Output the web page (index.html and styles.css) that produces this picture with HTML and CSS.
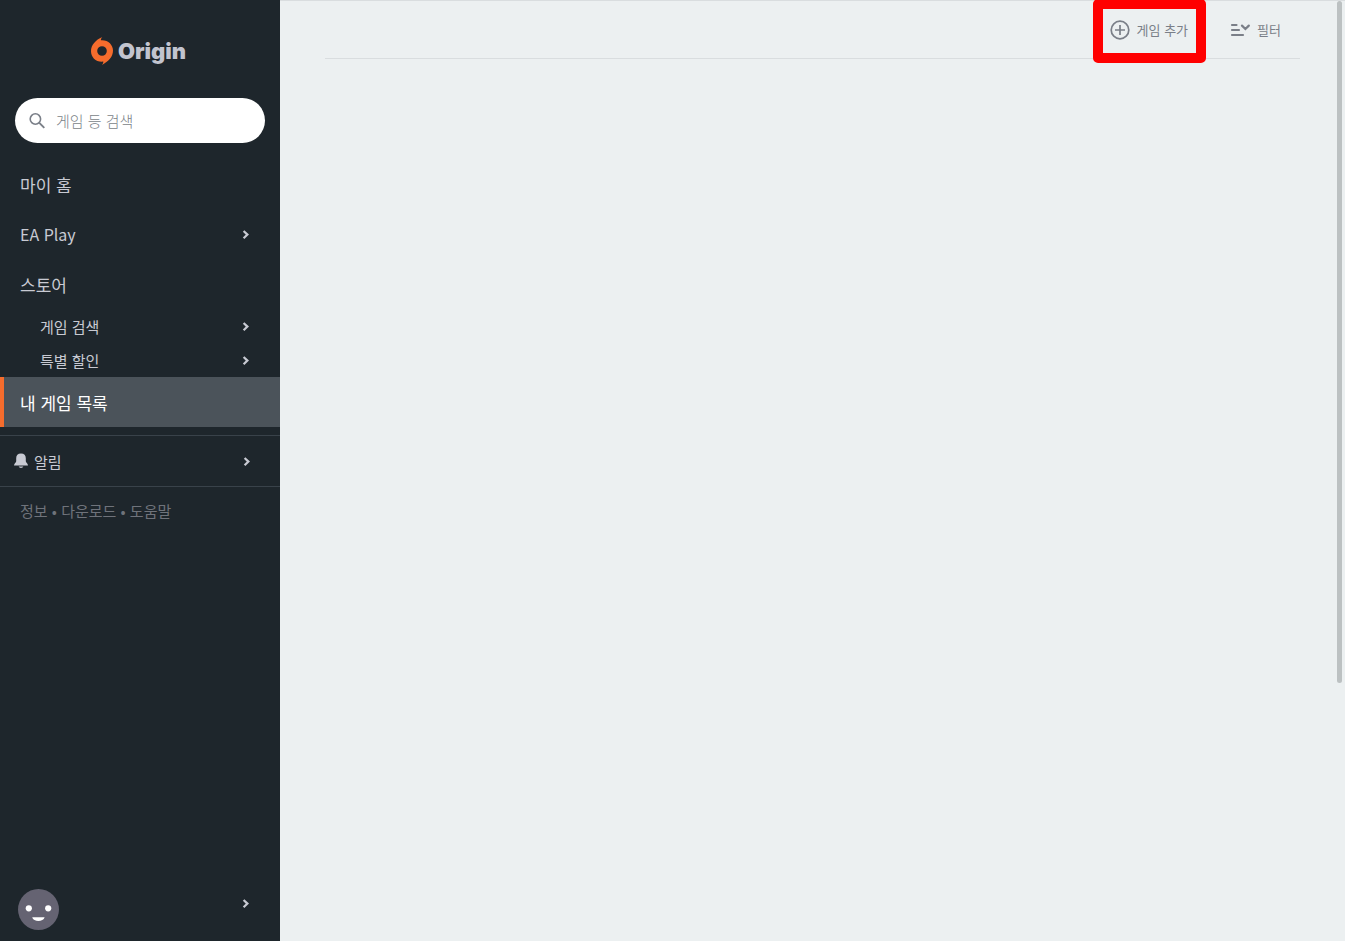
FILE: index.html
```html
<!DOCTYPE html>
<html lang="ko">
<head>
    <meta charset="UTF-8">
    <meta name="viewport" content="width=device-width, initial-scale=1.0">
    <title>Origin</title>
    <link rel="stylesheet" href="styles.css">
</head>
<body>
    <svg class="defs" aria-hidden="true">
        <symbol id="chevron" viewBox="0 0 8 10">
            <path d="M1.6 2 L5.4 5.6 L1.6 9.2" fill="none" stroke="currentColor" stroke-width="2.2"/>
        </symbol>
    </svg>
    <aside class="sidebar">
        <a href="#" class="logo">
            <svg width="22" height="28" viewBox="0 0 22 28" aria-hidden="true">
                <path fill="#f56c2d" fill-rule="evenodd" d="M11.3 0 C10.2 1.2 9.9 2.2 9.9 3.2 C17 2.6 22 7.6 22 13.6 C22 20 17.5 24.6 11 28 C12 26.8 12.4 25.7 12.3 24.6 C5 25.3 0 20.4 0 14.2 C0 8 4.6 3 11.3 0 Z M11 9.2 A4.8 4.8 0 1 0 11 18.8 A4.8 4.8 0 1 0 11 9.2 Z"/>
            </svg>
            <span>Origin</span>
        </a>
        <form class="search">
            <svg width="16" height="16" viewBox="0 0 16 16" aria-hidden="true">
                <circle cx="6.4" cy="6" r="5.2" fill="none" stroke="#7a7f88" stroke-width="1.6"/>
                <path d="M10.1 9.7 L15.3 14.9" stroke="#7a7f88" stroke-width="1.9"/>
            </svg>
            <input type="text" placeholder="게임 등 검색" aria-label="게임 등 검색">
        </form>
        <nav class="menu">
            <a href="#" class="item">마이 홈</a>
            <a href="#" class="item latin">EA Play<svg class="chevron"><use href="#chevron"/></svg></a>
            <a href="#" class="item">스토어</a>
            <a href="#" class="item sub">게임 검색<svg class="chevron"><use href="#chevron"/></svg></a>
            <a href="#" class="item sub">특별 할인<svg class="chevron"><use href="#chevron"/></svg></a>
            <a href="#" class="item active">내 게임 목록</a>
        </nav>
        <a href="#" class="notice">
            <svg width="14" height="16" viewBox="0 0 14 16" aria-hidden="true">
                <path fill="currentColor" d="M7 0.5 C3.8 0.5 2.2 2.6 2.2 5.2 V8.3 C2.2 9.6 0 10.6 0 12.4 H14 C14 10.6 11.8 9.6 11.8 8.3 V5.2 C11.8 2.6 10.2 0.5 7 0.5 Z M4.6 13.6 A2.5 1.9 0 0 0 9.4 13.6 Z"/>
            </svg>
            <span>알림</span>
            <svg class="chevron"><use href="#chevron"/></svg>
        </a>
        <div class="links">
            <a href="#">정보</a> • <a href="#">다운로드</a> • <a href="#">도움말</a>
        </div>
        <button type="button" class="profile" aria-label="프로필">
            <svg class="avatar" width="41" height="41" viewBox="0 0 41 41" aria-hidden="true">
                <circle cx="20.5" cy="20.5" r="20.5" fill="#656372"/>
                <circle cx="10.8" cy="19.3" r="3.1" fill="#fff"/>
                <circle cx="30.2" cy="19.3" r="3.1" fill="#fff"/>
                <path d="M14.2 28.3 H26.6 C25.4 33.3 15.4 33.3 14.2 28.3 Z" fill="#fff"/>
            </svg>
            <svg class="chevron"><use href="#chevron"/></svg>
        </button>
    </aside>
    <main class="content">
        <div class="toolbar">
            <button type="button" class="tool marked">
                <svg width="20" height="20" viewBox="0 0 20 20" aria-hidden="true">
                    <circle cx="10" cy="10" r="8.8" fill="none" stroke="currentColor" stroke-width="1.7"/>
                    <path d="M10 5 V15 M5 10 H15" stroke="currentColor" stroke-width="1.7"/>
                </svg>
                게임 추가
            </button>
            <button type="button" class="tool">
                <svg width="20" height="14" viewBox="0 0 20 14" aria-hidden="true">
                    <path d="M2 2 H6.5 M2 7 H9 M2 12 H13 M12 2.6 L15.4 6 L18.8 2.6" fill="none" stroke="currentColor" stroke-width="2.2" stroke-linecap="round"/>
                </svg>
                필터
            </button>
        </div>
        <div class="scrollbar"></div>
    </main>
</body>
</html>
```

FILE: styles.css
```css
* {
    box-sizing: border-box;
}

body {
    display: flex;
    margin: 0;
    min-height: 100vh;
    font-family: "Noto Sans CJK KR", "Noto Sans", sans-serif;
    background: #ecf0f1;
}

a {
    color: inherit;
    text-decoration: none;
}

button {
    padding: 0;
    border: 0;
    background: none;
    font-family: inherit;
    cursor: pointer;
}

.defs {
    position: absolute;
    width: 0;
    height: 0;
}

.sidebar {
    display: flex;
    flex-direction: column;
    flex: 0 0 280px;
    color: #c8cad3;
    background: #1e262c;
}

.logo {
    display: flex;
    align-items: center;
    justify-content: center;
    gap: 5px;
    height: 98px;
    padding: 4px 3px 0 0;
    font-family: Inter, sans-serif;
    font-size: 22px;
    font-weight: 900;
    color: #c2c4cf;
}

.search {
    display: flex;
    align-items: center;
    gap: 11px;
    height: 45px;
    margin: 0 15px 16px;
    padding: 0 14px;
    border-radius: 23px;
    background: #fff;
}

.search input {
    flex: 1;
    min-width: 0;
    padding: 0;
    border: 0;
    outline: 0;
    background: none;
    font-family: inherit;
    font-size: 15px;
    font-weight: 300;
}

.search input::placeholder {
    color: #7a7f88;
}

.chevron {
    width: 8px;
    height: 10px;
    margin-left: auto;
}

.item {
    display: flex;
    align-items: center;
    height: 50px;
    padding: 0 30px 0 20px;
    font-size: 17px;
}

.latin {
    font-size: 16px;
}

.sub {
    height: 34px;
    padding-left: 40px;
    font-size: 15px;
}

.active {
    padding-left: 16px;
    border-left: 4px solid #f56c2d;
    color: #fff;
    background: #4b535a;
}

.notice {
    display: flex;
    align-items: center;
    gap: 6px;
    height: 52px;
    margin-top: 8px;
    padding: 0 29px 0 14px;
    border-top: 1px solid #39424a;
    border-bottom: 1px solid #39424a;
    font-size: 15px;
}

.links {
    padding: 14px 20px;
    font-size: 15px;
    line-height: 20px;
    color: #6f737b;
}

.profile {
    display: flex;
    margin-top: auto;
    padding: 0 30px 11px 18px;
    color: inherit;
}

.profile .chevron {
    margin-top: 9px;
}

.content {
    position: relative;
    flex: 1;
    padding: 0 45px;
    border-top: 1px solid #d9dddf;
}

.toolbar {
    display: flex;
    justify-content: flex-end;
    gap: 42px;
    height: 58px;
    padding-right: 19px;
    border-bottom: 1px solid #d9dddf;
}

.tool {
    position: relative;
    display: flex;
    align-items: center;
    gap: 7px;
    font-size: 13px;
    color: #7a7f88;
}

/* red frame drawn over the button */
.marked::after {
    content: "";
    position: absolute;
    top: -2px;
    bottom: -5px;
    left: -17px;
    right: -18px;
    border: 10px solid #f00;
    border-radius: 5px;
}

.scrollbar {
    position: absolute;
    top: 0;
    right: 3px;
    width: 5px;
    height: 72.6%;
    border-radius: 3px;
    background: #bcc1c2;
}
```
